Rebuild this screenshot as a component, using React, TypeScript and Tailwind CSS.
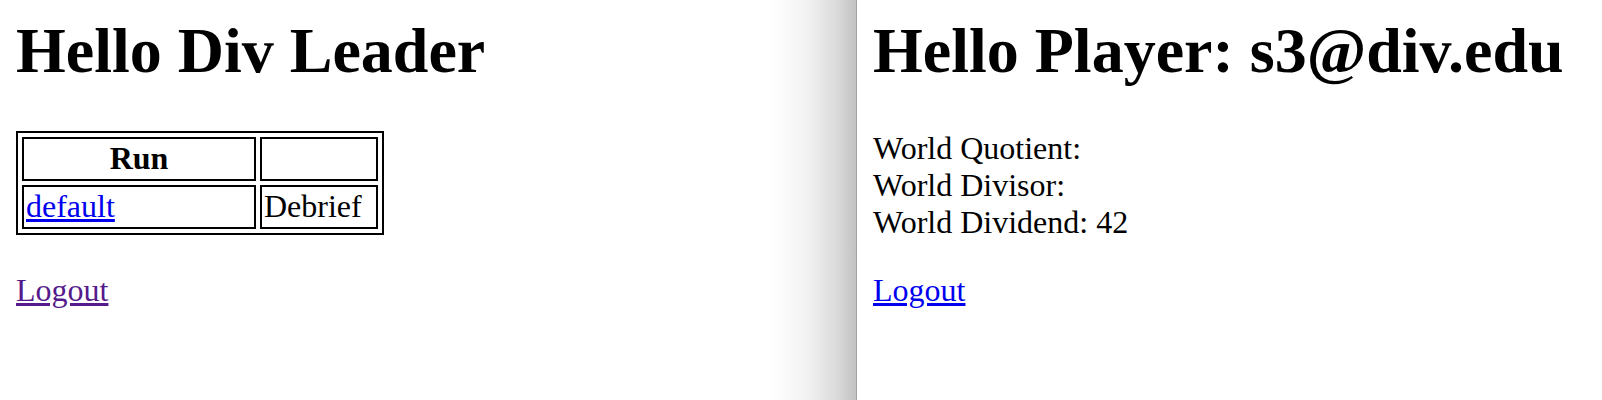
const LeaderPane = () => {
    const runs = [{ name: "default", action: "Debrief" }];

    return (
        <div className="w-[857px] shrink-0 h-full pt-[14px] pl-[16px] border-r border-[#a3a3a3] bg-[linear-gradient(to_right,#ffffff_770px,#f3f3f3_805px,#dcdcdc_835px,#c2c2c2_856px)]">
            <h1 className="text-[64px] leading-[74px] font-bold">Hello Div Leader</h1>
            <table className="mt-[43px] border-2 border-black border-separate border-spacing-[4px] text-[32px] leading-[36px]">
                <thead>
                    <tr>
                        <th className="w-[234px] border-2 border-black px-[2px] pt-[1px] pb-[3px] font-bold text-center">Run</th>
                        <th className="w-[118px] border-2 border-black px-[2px] pt-[1px] pb-[3px]"></th>
                    </tr>
                </thead>
                <tbody>
                    { runs.map((run) => (
                        <tr key={ run.name }>
                            <td className="border-2 border-black px-[2px] pt-[1px] pb-[3px] text-left">
                                <a href="#" className="text-[#0000ee] underline">{ run.name }</a>
                            </td>
                            <td className="border-2 border-black px-[2px] pt-[1px] pb-[3px] text-left">{ run.action }</td>
                        </tr>
                    )) }
                </tbody>
            </table>
            <p className="mt-[37px] text-[32px] leading-[37px]">
                <a href="#" className="text-[#551a8b] underline">Logout</a>
            </p>
        </div>
    );
};

const PlayerPane = () => {
    const stats = [
        { label: "World Quotient:", value: "" },
        { label: "World Divisor:", value: "" },
        { label: "World Dividend:", value: "42" },
    ];

    return (
        <div className="flex-1 h-full pt-[14px] pl-[16px] bg-white">
            <h1 className="text-[64px] leading-[74px] font-bold whitespace-nowrap">Hello Player: s3@div.edu</h1>
            <div className="mt-[42px] text-[32px] leading-[37px]">
                { stats.map((s) => (
                    <div key={ s.label }>{ s.label }{ s.value ? " " + s.value : "" }</div>
                )) }
            </div>
            <p className="mt-[31px] text-[32px] leading-[37px]">
                <a href="#" className="text-[#0000ee] underline">Logout</a>
            </p>
        </div>
    );
};

export default function App() {
    return (
        <div className="flex flex-row w-[1602px] h-[400px] overflow-hidden bg-white text-black font-['Liberation_Serif',serif]">
            <LeaderPane />
            <PlayerPane />
        </div>
    );
}
